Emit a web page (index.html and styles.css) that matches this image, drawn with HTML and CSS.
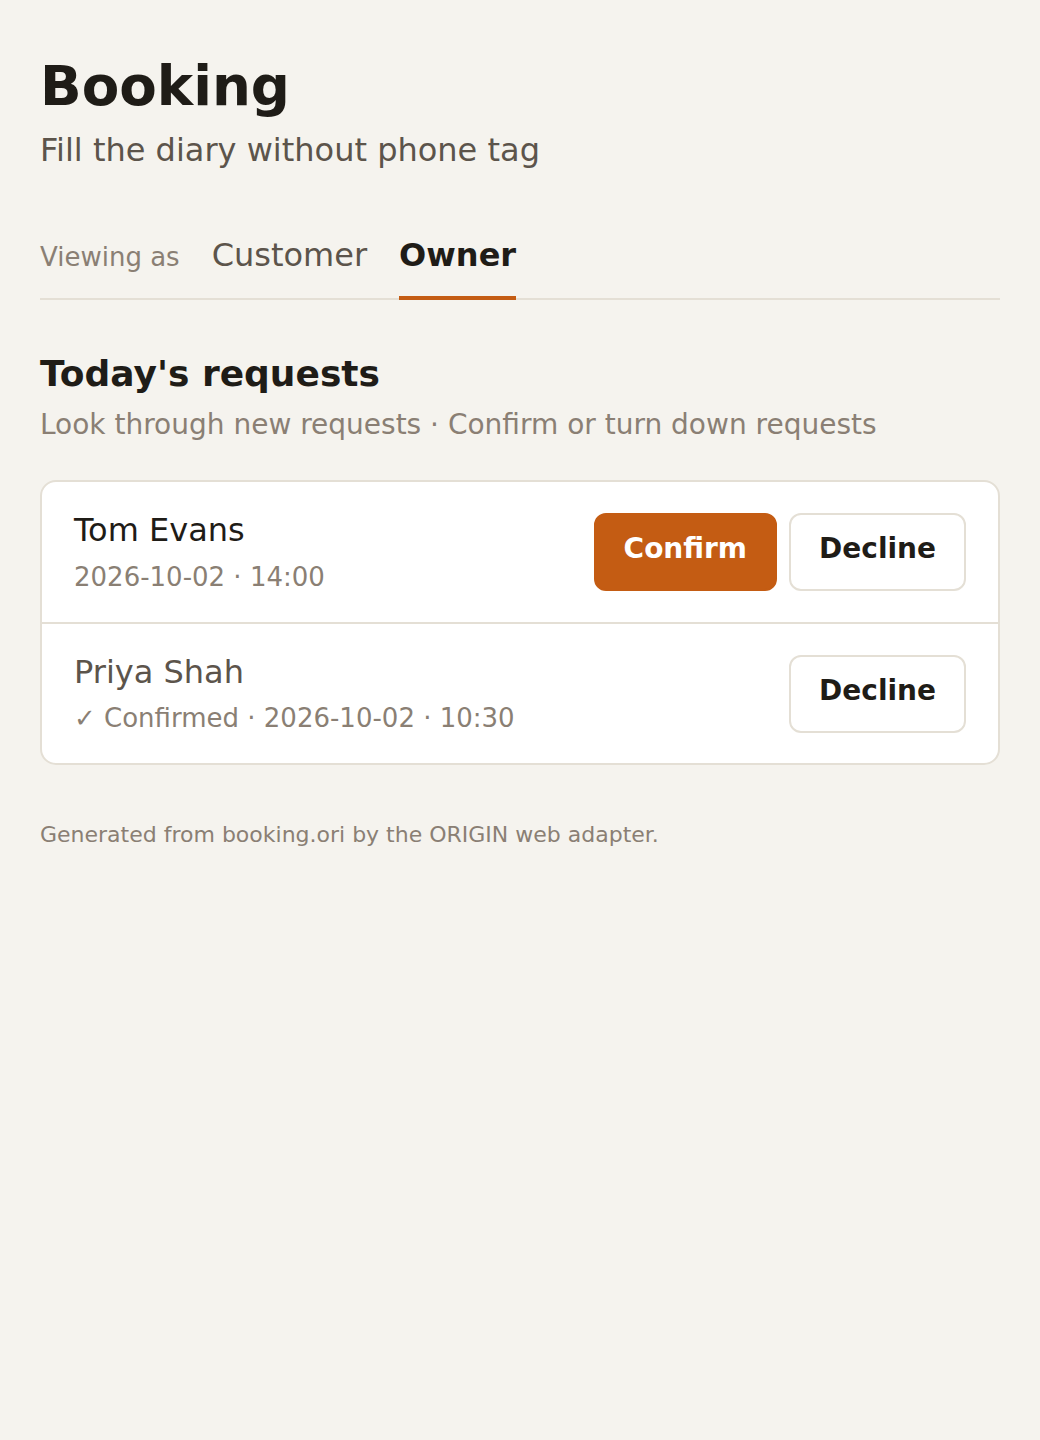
FILE: index.html
```html
<!DOCTYPE html>
<html lang="en">
<head>
<meta charset="utf-8">
<title>Booking</title>
<link rel="stylesheet" href="styles.css">
</head>
<body>
<main class="page">
  <header class="header">
    <h1 class="title">Booking</h1>
    <p class="subtitle">Fill the diary without phone tag</p>
  </header>

  <nav class="tabs">
    <span class="tabs-label">Viewing as</span>
    <span class="tab">Customer</span>
    <span class="tab tab-active">Owner</span>
  </nav>

  <section class="section">
    <h2 class="section-title">Today's requests</h2>
    <p class="section-sub">Look through new requests · Confirm or turn down requests</p>

    <div class="card">
      <div class="row">
        <div class="info">
          <div class="name">Tom Evans</div>
          <div class="meta">2026-10-02 · 14:00</div>
        </div>
        <div class="actions">
          <button class="btn btn-primary">Confirm</button>
          <button class="btn btn-secondary">Decline</button>
        </div>
      </div>
      <div class="row">
        <div class="info">
          <div class="name name-muted">Priya Shah</div>
          <div class="meta">✓ Confirmed · 2026-10-02 · 10:30</div>
        </div>
        <div class="actions">
          <button class="btn btn-secondary">Decline</button>
        </div>
      </div>
    </div>
  </section>

  <footer class="footer">Generated from booking.ori by the ORIGIN web adapter.</footer>
</main>
</body>
</html>
```

FILE: styles.css
```css
* {
  box-sizing: border-box;
}

html, body {
  margin: 0;
  padding: 0;
  background: #f5f3ee;
}

body {
  font-family: "DejaVu Sans", "Liberation Sans", sans-serif;
  color: #1f1c17;
}

.page {
  padding: 54px 40px 40px;
}

.title {
  margin: 0;
  font-size: 54.7px;
  line-height: 1.2;
  font-weight: 700;
  color: #1f1c17;
}

.subtitle {
  margin: 8px 0 0;
  font-size: 32px;
  line-height: 1.4;
  color: #5c544b;
}

.tabs {
  margin-top: 64px;
  display: flex;
  align-items: baseline;
  gap: 32px;
  border-bottom: 2px solid #e4dfd5;
}

.tabs-label {
  font-size: 26px;
  line-height: 1.2;
  color: #8a7f74;
}

.tab {
  font-size: 32px;
  line-height: 1.2;
  color: #5c544b;
  padding-bottom: 21px;
  border-bottom: 4px solid transparent;
  margin-bottom: -2px;
}

.tab-active {
  font-weight: 700;
  color: #1f1c17;
  border-bottom-color: #c45c13;
}

.section {
  margin-top: 52px;
}

.section-title {
  margin: 0;
  font-size: 36px;
  line-height: 1.2;
  font-weight: 700;
  color: #1f1c17;
}

.section-sub {
  margin: 10px 0 0;
  font-size: 28px;
  line-height: 1.4;
  color: #8a7f74;
}

.card {
  margin-top: 36px;
  background: #ffffff;
  border: 2px solid #e4dfd5;
  border-radius: 16px;
  overflow: hidden;
}

.row {
  display: flex;
  align-items: center;
  justify-content: space-between;
  padding: 29px 32px;
}

.row + .row {
  border-top: 2px solid #e4dfd5;
}

.info {
  display: flex;
  flex-direction: column;
}

.name {
  font-size: 32px;
  line-height: 1.2;
  color: #1f1c17;
  margin-bottom: 12px;
}

.name-muted {
  color: #5c544b;
}

.meta {
  font-size: 26px;
  line-height: 1.2;
  color: #8a7f74;
}

.actions {
  display: flex;
  gap: 12px;
}

.btn {
  font-family: "DejaVu Sans", "Liberation Sans", sans-serif;
  font-size: 28px;
  font-weight: 700;
  line-height: 34px;
  padding: 17px 28px 23px;
  border-radius: 12px;
  border: 2px solid #e4dfd5;
  cursor: pointer;
}

.btn-primary {
  background: #c45c13;
  border-color: #c45c13;
  color: #ffffff;
}

.btn-secondary {
  background: #ffffff;
  color: #1f1c17;
}

.footer {
  margin-top: 55px;
  font-size: 22px;
  line-height: 1.4;
  color: #8a7f74;
}
```
